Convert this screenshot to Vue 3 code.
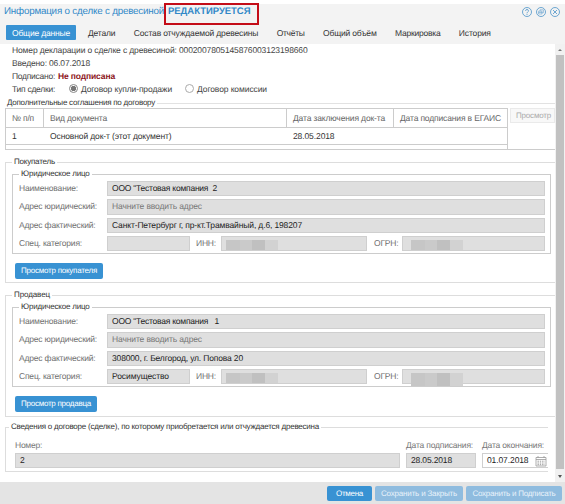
<script setup>
// Spreads a label's glyphs so that it takes the given width in pixels.
const vFit = {
  mounted(el, { value }) {
    if (!value) return
    const natural = el.getBoundingClientRect().width
    el.style.letterSpacing = (value - natural) / el.textContent.length + 'px'
  },
}

const tabs = [
  { text: 'Общие данные', w: 58, active: true },
  { text: 'Детали', w: 27.5 },
  { text: 'Состав отчуждаемой древесины', w: 124.5 },
  { text: 'Отчёты', w: 28 },
  { text: 'Общий объём', w: 53.5 },
  { text: 'Маркировка', w: 45.5 },
  { text: 'История', w: 32 },
]

const parties = [
  {
    key: 'buyer', title: 'Покупатель', tw: 41,
    rows: [
      { label: 'Наименование:', lw: 59, text: 'ООО "Тестовая компания  2', w: 105 },
      { label: 'Адрес юридический:', lw: 78, text: 'Начните вводить адрес', w: 90, hint: true },
      { label: 'Адрес фактический:', lw: 76.5, text: 'Санкт-Петербург г, пр-кт.Трамвайный, д.6, 198207', w: 190 },
    ],
    category: '', cw: 0, button: 'Просмотр покупателя', bw: 76,
  },
  {
    key: 'seller', title: 'Продавец', tw: 36,
    rows: [
      { label: 'Наименование:', lw: 59, text: 'ООО "Тестовая компания   1', w: 107 },
      { label: 'Адрес юридический:', lw: 78, text: 'Начните вводить адрес', w: 90, hint: true },
      { label: 'Адрес фактический:', lw: 76.5, text: '308000, г. Белгород, ул. Попова 20', w: 131 },
    ],
    category: 'Росимущество', cw: 57, button: 'Просмотр продавца', bw: 70,
  },
]
</script>

<template>
  <div class="window">
    <header class="head">
      <div class="title-row">
        <span v-fit="160" class="t title">Информация о сделке с древесиной</span>
        <span class="edit-mark"><b v-fit="82.5" class="t">РЕДАКТИРУЕТСЯ</b></span>
        <div class="tools">
          <svg viewBox="0 0 10 10"><circle cx="5" cy="5" r="4.5" /><path d="M3.5 3.9C3.5 2 6.5 2 6.5 3.9C6.5 5 5 5 5 6.3M5 7.1V8" /></svg>
          <svg viewBox="0 0 10 10"><circle cx="5" cy="5" r="4.5" /><path class="thin" d="M2.6 4.2H6V7H2.6ZM4 4V2.8H7.4V5.7H6.2M2.7 5.5H6" /></svg>
          <svg viewBox="0 0 10 10"><circle cx="5" cy="5" r="4.5" /><path d="M3 3L7 7M7 3L3 7" /></svg>
        </div>
      </div>
      <nav class="tabs">
        <span v-for="tab in tabs" :key="tab.text" class="tab" :class="{ active: tab.active }"><span v-fit="tab.w" class="t">{{ tab.text }}</span></span>
      </nav>
    </header>

    <div class="body">
      <main class="content">
        <div class="info">
          <div class="line"><span v-fit="295.5" class="t">Номер декларации о сделке с древесиной: 0002007805145876003123198660</span></div>
          <div class="line"><span v-fit="78" class="t">Введено: 06.07.2018</span></div>
          <div class="line"><span v-fit="43" class="t">Подписано:</span><b v-fit="57" class="t unsigned">Не подписана</b></div>
          <div class="line type">
            <span v-fit="43" class="t type-label">Тип сделки:</span>
            <i class="radio on"></i><span v-fit="91" class="t first-option">Договор купли-продажи</span>
            <i class="radio"></i><span v-fit="70" class="t">Договор комиссии</span>
          </div>
        </div>

        <section class="agreements">
          <div class="rule-title"><span v-fit="148" class="t">Дополнительные соглашения по договору</span><i></i></div>
          <div class="agreements-row">
            <div class="table">
              <div class="tr th">
                <span class="td"><span v-fit="22" class="t">№ п/п</span></span>
                <span class="td"><span v-fit="57" class="t">Вид документа</span></span>
                <span class="td"><span v-fit="92" class="t">Дата заключения док-та</span></span>
                <span class="td"><span v-fit="101" class="t">Дата подписания в ЕГАИС</span></span>
              </div>
              <div class="tr">
                <span class="td"><span class="t">1</span></span>
                <span class="td"><span v-fit="121.5" class="t">Основной док-т (этот документ)</span></span>
                <span class="td"><span v-fit="41.5" class="t">28.05.2018</span></span>
                <span class="td"></span>
              </div>
            </div>
            <div class="view-off"><span v-fit="35" class="t">Просмотр</span></div>
          </div>
        </section>

        <section v-for="p in parties" :key="p.key" class="group" :class="p.key">
          <div class="legend"><span v-fit="p.tw" class="t">{{ p.title }}</span></div>
          <div class="inner">
            <div class="legend"><span v-fit="68.5" class="t">Юридическое лицо</span></div>
            <div class="fields">
              <div v-for="r in p.rows" :key="r.label" class="row">
                <span class="label"><span v-fit="r.lw" class="t">{{ r.label }}</span></span>
                <span class="field grow" :class="{ hint: r.hint }"><span v-fit="r.w" class="t">{{ r.text }}</span></span>
              </div>
              <div class="row">
                <span class="label"><span v-fit="63" class="t">Спец. категория:</span></span>
                <span class="field category"><span v-fit="p.cw" class="t">{{ p.category }}</span></span>
                <span class="label inn"><span v-fit="20" class="t">ИНН:</span></span>
                <span class="field inn-field"><i class="mask"><i></i><i></i><i></i><i></i></i></span>
                <span class="label ogrn"><span v-fit="24.5" class="t">ОГРН:</span></span>
                <span class="field grow ogrn-field"><i class="mask wide"><i></i><i></i><i></i><i></i></i></span>
              </div>
            </div>
          </div>
          <button class="btn small"><span v-fit="p.bw" class="t">{{ p.button }}</span></button>
        </section>

        <section class="group contract">
          <div class="legend"><span v-fit="308" class="t">Сведения о договоре (сделке), по которому приобретается или отчуждается древесина</span></div>
          <div class="contract-fields">
            <div class="cell number"><span v-fit="27" class="t">Номер:</span><span class="field"><span class="t">2</span></span></div>
            <div class="cell signed"><span v-fit="67" class="t">Дата подписания:</span><span class="field"><span v-fit="41" class="t">28.05.2018</span></span></div>
            <div class="cell ends"><span v-fit="62" class="t">Дата окончания:</span><span class="field white"><span v-fit="41.5" class="t">01.07.2018</span>
              <svg viewBox="0 0 12 12"><path d="M1 2.5H11V11H1ZM1 4.5H11M3 1V3M9 1V3" /><path class="days" d="M2.5 6.2H9.8M2.5 8H9.8M2.5 9.7H9.8" /></svg>
            </span></div>
          </div>
        </section>
      </main>
      <div class="scrollbar"><i class="up"></i><i class="thumb"></i><i class="down"></i></div>
    </div>

    <footer class="foot">
      <button class="btn cancel"><span v-fit="27" class="t">Отмена</span></button>
      <button class="btn off close"><span v-fit="76" class="t">Сохранить и Закрыть</span></button>
      <button class="btn off sign"><span v-fit="83" class="t">Сохранить и Подписать</span></button>
    </footer>
  </div>
</template>

<style>
body { background: #fff; }
</style>

<style scoped>
* { box-sizing: border-box; }
.window {
  width: 565px; height: 504px; padding-top: 4px; overflow: hidden;
  display: flex; flex-direction: column;
  font: 8.5px/12px "Liberation Sans", Arial, sans-serif; color: #333;
  text-rendering: geometricPrecision;
}
.t { display: inline-block; flex: none; white-space: pre; }
.head { height: 40px; flex: none; background: #f3f3f3; }
.title-row { display: flex; height: 21px; margin-top: -1px; padding-left: 4px; }
.title { width: auto; font-size: 9.8px; line-height: 18px; color: #3289c8; }
.edit-mark {
  width: 95px; height: 22px; padding-left: 2px; border: 2px solid #c40d18;
  font-size: 9.5px; line-height: 14px; color: #3289c8; flex: none;
}
.tools { display: flex; gap: 4px; margin: 4px 5px 0 auto; }
.tools svg { width: 10px; height: 10px; fill: none; stroke: #4b93c8; stroke-width: .8; }
.tools .thin { stroke-width: .5; }
.tabs { display: flex; gap: 18.4px; height: 16px; margin-top: 1px; padding-left: 6px; }
.tab { line-height: 16px; }
.tab.active { width: 70px; height: 15px; margin-right: -6.5px; padding-left: 6px; background: #3892d3; color: #fff; border-radius: 1px; }
.body { display: flex; height: 438px; flex: none; }
.content { width: 555px; overflow: hidden; }
.info { height: 54px; padding-left: 12px; color: #444; }
.line { display: flex; align-items: center; height: 13px; }
.line:first-child { height: 12px; }
.unsigned { margin-left: 3px; color: #8c1420; }
.type-label { margin-right: 14px; }
.radio { width: 9px; height: 9px; margin-right: 3px; border: 1px solid #aaa; border-radius: 50%; }
.radio.on { border-color: #888; background: radial-gradient(circle, #777 0 2.3px, #fff 3px); }
.first-option { margin-right: 13px; }
.rule-title { display: flex; align-items: center; gap: 2px; height: 10px; margin-left: -5px; padding-left: 7px; font-size: 8px; }
.rule-title i { flex: 1; height: 1px; background: #e2e2e2; }
.agreements { height: 54px; padding-left: 5px; }
.agreements-row { display: flex; height: 42px; border-bottom: 1px solid #ccc; }
.table { width: 503px; border: solid #ccc; border-width: 1px 1px 0; }
.tr { display: grid; grid-template-columns: 37px 243px 107px 1fr; height: 17px; border-bottom: 1px solid #ccc; line-height: 16px; }
.th { height: 19px; line-height: 18px; color: #666; }
.td { padding-left: 6px; }
.td + .td { padding-left: 7px; }
.th .td + .td { padding-left: 6px; border-left: 1px solid #ccc; }
.view-off { width: 45px; height: 15px; margin-left: 2px; padding-left: 5px; border: 1px solid #eaeaea; background: #f8f8f8; color: #aaa; line-height: 13px; font-size: 8px; }
.group { height: 121px; margin-left: 5px; border: 1px solid #ddd; border-right: 0; }
.legend { display: flex; width: max-content; height: 10px; margin: -6px 0 0 6px; padding: 0 2px; background: #fff; line-height: 10px; font-size: 8px; }
.group.buyer { margin-top: 10px; }
.group.seller { margin-top: 12px; height: 122px; }
.inner { height: 80px; width: 539px; margin: 7px 0 0 6px; border: 1px solid #ccc; }
.fields { display: grid; gap: 3px; margin-top: 2px; padding: 0 5px 0 6px; }
.row { display: flex; height: 15.3px; }
.label { width: 88px; flex: none; color: #707070; line-height: 15px; }
.field { height: 15.3px; padding-left: 4px; border: 1px solid #cfcfcf; background: #dfdfdf; line-height: 13.5px; color: #222; }
.grow { flex: 1; }
.hint { color: #777; }
.category { width: 83px; }
.label.inn { width: 31px; padding-left: 6px; }
.inn-field { width: 146px; }
.label.ogrn { width: 35px; padding-left: 7px; }
.mask { display: flex; height: 10px; margin-top: 3px; }
.mask i:nth-child(1) { width: 14px; background: #c6c6c6; }
.mask i:nth-child(2) { width: 12px; background: #cacaca; }
.mask i:nth-child(3) { width: 13px; background: #c0c0c0; }
.mask i:nth-child(4) { width: 13px; background: #d2d2d2; }
.mask.wide { margin-left: 4px; }
.seller .mask.wide { height: 13px; }
.btn { display: flex; align-items: center; justify-content: center; height: 15px; padding: 0; border: 0; border-radius: 2px; background: #3892d3; color: #fff; font: inherit; font-size: 8px; text-rendering: inherit; flex: none; }
.small { width: 88px; height: 16px; margin: 9px 0 0 9px; }
.seller .small { width: 82px; }
.group.contract { width: 543px; height: 45px; margin-top: 10px; }
.contract .legend { margin-left: 3px; }
.contract-fields { display: flex; gap: 6px; margin: 6px 0 0 9px; color: #777; }
.cell { display: flex; flex-direction: column; }
.cell > .t { align-self: flex-start; height: 15px; line-height: 14px; }
.number { width: 385px; }
.signed { width: 70px; }
.ends { width: 66px; }
.white { display: flex; background: #fff; border-right: 0; }
.white svg { width: 12px; height: 12px; margin: 1px 1px 0 auto; fill: none; stroke: #999; stroke-width: .8; flex: none; }
.white .days { stroke-dasharray: 1.4 .9; stroke-width: 1; }
.scrollbar { width: 10px; display: flex; flex-direction: column; align-items: center; background: #f1f1f1; padding: 5px 0 4px; }
.up, .down { border: 2px solid transparent; border-top: 0; border-bottom: 2px solid #777; }
.thumb { width: 8px; flex: 1; margin: 4px 0 6px; background: #c1c1c1; }
.down { border-top: 3px solid #555; border-bottom: 0; }
.foot { display: flex; gap: 3px; height: 22px; flex: none; justify-content: flex-end; padding: 4px 3px 0 0; background: #e4e4e4; }
.cancel { width: 45px; }
.close { width: 88px; }
.sign { width: 96px; }
.off { background: #8fbcdf; color: #e8f2fa; }
</style>
